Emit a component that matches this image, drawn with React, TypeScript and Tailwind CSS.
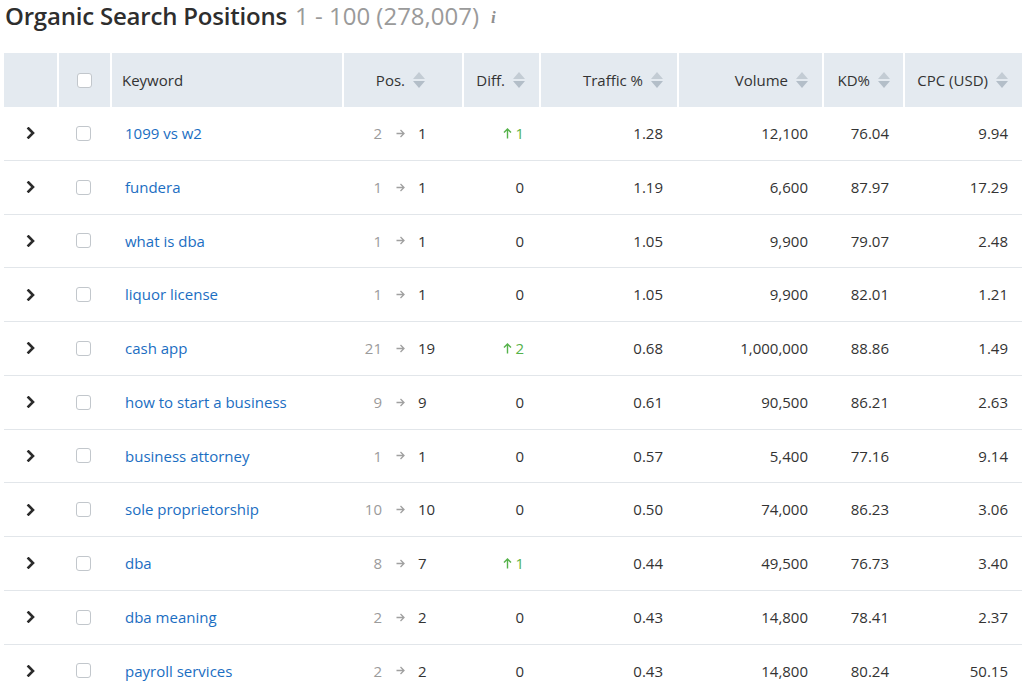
import React from "react";

type Row = {
  keyword: string;
  from: number;
  to: number;
  diff: number;
  traffic: string;
  volume: string;
  kd: string;
  cpc: string;
};

const rows: Row[] = [
  { keyword: "1099 vs w2", from: 2, to: 1, diff: 1, traffic: "1.28", volume: "12,100", kd: "76.04", cpc: "9.94" },
  { keyword: "fundera", from: 1, to: 1, diff: 0, traffic: "1.19", volume: "6,600", kd: "87.97", cpc: "17.29" },
  { keyword: "what is dba", from: 1, to: 1, diff: 0, traffic: "1.05", volume: "9,900", kd: "79.07", cpc: "2.48" },
  { keyword: "liquor license", from: 1, to: 1, diff: 0, traffic: "1.05", volume: "9,900", kd: "82.01", cpc: "1.21" },
  { keyword: "cash app", from: 21, to: 19, diff: 2, traffic: "0.68", volume: "1,000,000", kd: "88.86", cpc: "1.49" },
  { keyword: "how to start a business", from: 9, to: 9, diff: 0, traffic: "0.61", volume: "90,500", kd: "86.21", cpc: "2.63" },
  { keyword: "business attorney", from: 1, to: 1, diff: 0, traffic: "0.57", volume: "5,400", kd: "77.16", cpc: "9.14" },
  { keyword: "sole proprietorship", from: 10, to: 10, diff: 0, traffic: "0.50", volume: "74,000", kd: "86.23", cpc: "3.06" },
  { keyword: "dba", from: 8, to: 7, diff: 1, traffic: "0.44", volume: "49,500", kd: "76.73", cpc: "3.40" },
  { keyword: "dba meaning", from: 2, to: 2, diff: 0, traffic: "0.43", volume: "14,800", kd: "78.41", cpc: "2.37" },
  { keyword: "payroll services", from: 2, to: 2, diff: 0, traffic: "0.43", volume: "14,800", kd: "80.24", cpc: "50.15" },
];

// column widths measured off the screenshot, 4px..1022px
const cols =
  "grid grid-cols-[53px_53px_232px_120px_77px_138px_145px_81px_119px]";

function SortIcon() {
  return (
    <svg width="12" height="18" viewBox="0 0 12 18" className="ml-2 shrink-0">
      <path d="M6 1 L12 8 H0 Z" fill="#c3ccd4" />
      <path d="M6 17 L12 10 H0 Z" fill="#b3bec8" />
    </svg>
  );
}

function Checkbox() {
  return (
    <span className="block h-[15px] w-[15px] rounded-[3px] border border-[#c2c7cc] bg-white" />
  );
}

function Chevron() {
  return (
    <svg width="10" height="12" viewBox="0 0 10 12">
      <path
        d="M2.5 1.5 L7 6 L2.5 10.5"
        fill="none"
        stroke="#2b2b2b"
        strokeWidth="2.6"
        strokeLinecap="square"
      />
    </svg>
  );
}

function RightArrow() {
  return (
    <svg width="9" height="9" viewBox="0 0 9 9">
      <path
        d="M0.5 4.5 H8 M4.5 1 L8 4.5 L4.5 8"
        fill="none"
        stroke="#a0a0a0"
        strokeWidth="1.3"
      />
    </svg>
  );
}

function UpArrow() {
  return (
    <svg width="9" height="11" viewBox="0 0 9 11" className="mr-[3px]">
      <path
        d="M4.5 10.5 V1 M1 4.5 L4.5 1 L8 4.5"
        fill="none"
        stroke="#55b24a"
        strokeWidth="1.4"
      />
    </svg>
  );
}

function HeadCell({
  children,
  className = "",
}: {
  children?: React.ReactNode;
  className?: string;
}) {
  return (
    <div
      className={`flex h-full items-center border-l-2 border-white ${className}`}
    >
      {children}
    </div>
  );
}

export default function App() {
  return (
    <div className="min-h-[696px] bg-white font-['Open_Sans',sans-serif] text-[#333]">
      <div className="flex h-[32px] items-center pl-[5px]">
        <h1 className="text-[24px] font-semibold leading-[32px] tracking-[-0.2px] text-[#2e2e2e]">
          Organic Search Positions
        </h1>
        <span className="ml-[8px] text-[24px] leading-[32px] text-[#9a9a9a]">
          1 - 100 (278,007)
        </span>
        <span className="ml-[12px] pt-[3px] font-['Liberation_Serif',serif] text-[17px] font-bold italic leading-[25px] text-[#8f8f8f]">
          i
        </span>
      </div>

      <div className="ml-[4px] mt-[21px] w-[1018px] text-[15px]">
        <div className={`${cols} h-[54px] bg-[#e4eaf0]`}>
          <div />
          <HeadCell className="justify-center">
            <Checkbox />
          </HeadCell>
          <HeadCell className="pl-[10px]">Keyword</HeadCell>
          <HeadCell className="justify-end pr-[37px]">
            Pos.
            <SortIcon />
          </HeadCell>
          <HeadCell className="justify-end pr-[14px]">
            Diff.
            <SortIcon />
          </HeadCell>
          <HeadCell className="justify-end pr-[14px]">
            Traffic %
            <SortIcon />
          </HeadCell>
          <HeadCell className="justify-end pr-[14px]">
            Volume
            <SortIcon />
          </HeadCell>
          <HeadCell className="justify-end pr-[13px]">
            KD%
            <SortIcon />
          </HeadCell>
          <HeadCell className="justify-end pr-[14px]">
            CPC (USD)
            <SortIcon />
          </HeadCell>
        </div>

        {rows.map((r) => (
          <div
            key={r.keyword}
            className={`${cols} h-[53.75px] items-center border-b border-[#e2e6ea]`}
          >
            <div className="flex justify-center">
              <Chevron />
            </div>
            <div className="flex justify-center">
              <Checkbox />
            </div>
            <div className="pl-[15px] text-[#1b6ec2]">{r.keyword}</div>
            <div className="flex items-center justify-end pr-[14px]">
              <span className="w-[24px] text-right text-[#9b9b9b]">
                {r.from}
              </span>
              <span className="flex w-[36px] justify-center">
                <RightArrow />
              </span>
              <span className="w-[30px] text-left">{r.to}</span>
            </div>
            <div className="flex justify-end pr-[15px]">
              {r.diff > 0 ? (
                <span className="flex items-center text-[#55b24a]">
                  <UpArrow />
                  {r.diff}
                </span>
              ) : (
                "0"
              )}
            </div>
            <div className="pr-[14px] text-right">{r.traffic}</div>
            <div className="pr-[14px] text-right">{r.volume}</div>
            <div className="pr-[14px] text-right">{r.kd}</div>
            <div className="pr-[14px] text-right">{r.cpc}</div>
          </div>
        ))}
      </div>
    </div>
  );
}
